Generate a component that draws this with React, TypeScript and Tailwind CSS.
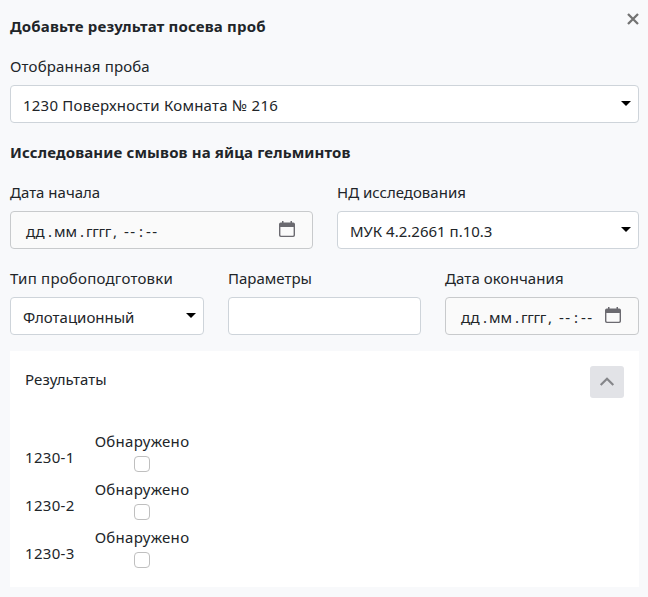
import type { ReactNode } from "react";

function Label({ children, className = "" }: { children: ReactNode; className?: string }) {
  return <label className={`mb-[7px] -mt-px block h-6 whitespace-nowrap ${className}`}>{children}</label>;
}

function Select({ value, className = "" }: { value: string; className?: string }) {
  return (
    <div className="flex h-[38px] items-center justify-between rounded-[4px] border border-[#ced4da] bg-white pr-[7px] pl-3">
      <span className={`relative top-px whitespace-nowrap ${className}`}>{value}</span>
      <svg width="10" height="5" viewBox="0 0 10 5" className="mb-px" fill="#000">
        <path d="M0 0h10L5 5z" />
      </svg>
    </div>
  );
}

function DateInput({ className = "" }: { className?: string }) {
  return (
    <div className={`flex h-[38px] items-center justify-between rounded-[4px] border border-[#c8cacc] bg-[#fafafa] pl-[15px] ${className}`}>
      <span className="relative top-px flex whitespace-pre">
        <span className="w-[22px]">дд</span>
        <span className="w-1.5">.</span>
        <span className="w-[26px]">мм</span>
        <span className="w-1.5">.</span>
        <span className="w-[27px] tracking-[-0.3px]">гггг</span>
        <span className="w-[11px]">,</span>
        <span className="w-[15px] tracking-[1.4px]">--</span>
        <span className="w-[7px]">:</span>
        <span className="tracking-[1.4px]">--</span>
      </span>
      <svg width="16" height="16" viewBox="0 0 16 16" className="mb-[3px]" fill="#6b6a70">
        <path fillRule="evenodd" d="M3 0h1.5v1.5h7V0H13v1.5h1.2A1.8 1.8 0 0 1 16 3.3v10.9a1.8 1.8 0 0 1-1.8 1.8H1.8A1.8 1.8 0 0 1 0 14.200V3.300A1.800 1.800 0 0 1 1.800 1.500H3zM1.400 6v8a.7.7 0 0 0 .7.7h11.800a.7.7 0 0 0 .7-.7V6z" />
      </svg>
    </div>
  );
}

const samples = ["1230-1", "1230-2", "1230-3"];

export default function App() {
  return (
    <main className="h-[597px] w-[648px] bg-[#f8f9fb] pt-3.5 pr-[9px] pl-2.5 font-['Noto_Sans',sans-serif] text-[15px] leading-6 text-[#212529]">
      <header className="flex h-[25px] justify-between">
        <h1 className="font-bold tracking-[0.18px] whitespace-nowrap">Добавьте результат посева проб</h1>
        <button aria-label="Закрыть" className="-mt-0.5 h-[14px]">
          <svg width="12" height="12" viewBox="0 0 12 12" stroke="#737373" strokeWidth="2.3">
            <path d="M1 1l10 10M11 1L1 11" />
          </svg>
        </button>
      </header>

      <section className="mt-4 flow-root">
        <Label className="tracking-[0.16px]">Отобранная проба</Label>
        <Select value="1230 Поверхности Комната № 216" className="tracking-[0.23px]" />
      </section>

      <h2 className="mt-[17px] h-[25px] font-bold tracking-[0.13px] whitespace-nowrap">Исследование смывов на яйца гельминтов</h2>

      <section className="mt-4 grid grid-cols-[303px_302px] gap-6">
        <div className="flow-root">
          <Label>Дата начала</Label>
          <DateInput className="pr-[17px]" />
        </div>
        <div className="flow-root">
          <Label>НД исследования</Label>
          <Select value="МУК 4.2.2661 п.10.3" />
        </div>
      </section>

      <section className="mt-[18px] grid grid-cols-[194px_193px_194px] gap-6">
        <div className="flow-root">
          <Label className="tracking-[0.22px]">Тип пробоподготовки</Label>
          <Select value="Флотационный" />
        </div>
        <div className="flow-root">
          <Label>Параметры</Label>
          <div className="h-[38px] rounded-[4px] border border-[#ced4da] bg-white" />
        </div>
        <div className="flow-root">
          <Label className="tracking-[0.1px]">Дата окончания</Label>
          <DateInput className="pr-[17px]" />
        </div>
      </section>

      <section className="mt-4 h-[236px] bg-white p-[15px]">
        <div className="flex h-[63px] items-start justify-between">
          <h3 className="mt-px tracking-[0.1px]">Результаты</h3>
          <button aria-label="Свернуть" className="flex h-8 w-[34px] items-center justify-center rounded-[3px] bg-[#e2e3e7]">
            <svg width="16" height="10" viewBox="0 0 16 10" fill="none" stroke="#85868a" strokeWidth="2.2">
              <path d="M1.700 8L8 1.700L14.300 8" />
            </svg>
          </button>
        </div>
        {samples.map((sample) => (
          <div key={sample} className="flex h-12">
            <span className="mt-4 w-[69px] tracking-[0.3px]">{sample}</span>
            <div className="flex w-24 flex-col items-center">
              <span className="tracking-[0.3px]">Обнаружено</span>
              <span className="mt-[3px] size-4 rounded-[4px] border border-[#bfbfbf] bg-white" />
            </div>
          </div>
        ))}
      </section>
    </main>
  );
}
